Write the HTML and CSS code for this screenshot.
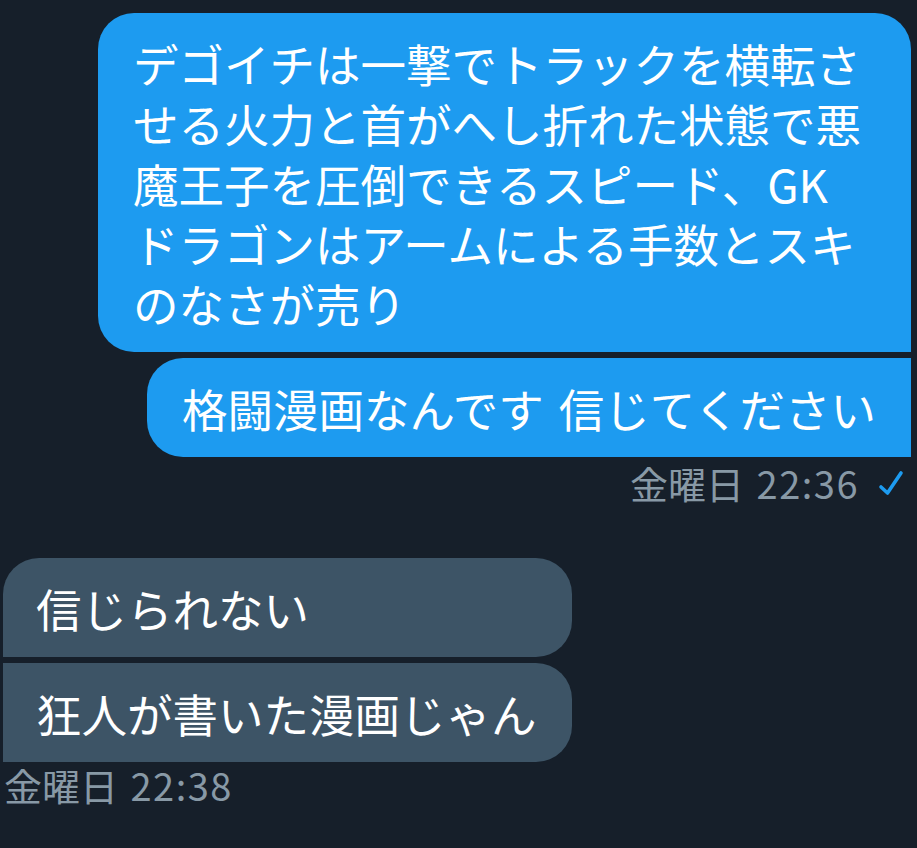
FILE: index.html
```html
<!DOCTYPE html>
<html lang="ja">
<head>
    <meta charset="UTF-8">
    <meta name="viewport" content="width=device-width, initial-scale=1.0">
    <title>メッセージ</title>
    <link rel="stylesheet" href="styles.css">
</head>
<body>
    <div class="thread">
        <div class="group sent">
            <div class="bubble">デゴイチは一撃でトラックを横転させる火力と首がへし折れた状態で悪魔王子を圧倒できるスピード、GKドラゴンはアームによる手数とスキのなさが売り</div>
            <div class="bubble">格闘漫画なんです 信じてください</div>
            <div class="meta">
                <span>金曜日 <span class="time">22:36</span></span>
                <svg class="check" width="26" height="26" viewBox="0 0 26 26">
                    <path d="M3 17 L9.5 23 L23 3" fill="none" stroke="#1d9bf0" stroke-width="3.6" stroke-linecap="round" stroke-linejoin="round"/>
                </svg>
            </div>
        </div>

        <div class="group received">
            <div class="stack">
                <div class="bubble">信じられない</div>
                <div class="bubble">狂人が書いた漫画じゃん</div>
            </div>
            <div class="meta">
                <span>金曜日 <span class="time">22:38</span></span>
            </div>
        </div>
    </div>
</body>
</html>
```

FILE: styles.css
```css
body {
    margin: 0;
    background: #161f2a;
    color: #ffffff;
    font-family: "Noto Sans CJK JP", "Noto Sans", sans-serif;
}

.thread {
    padding-top: 13px;
}

.group {
    display: flex;
    flex-direction: column;
}

.bubble {
    box-sizing: border-box;
    padding: 19.5px 35px;
    font-size: 45.5px;
    line-height: 60px;
    word-spacing: 5px;
}

/* Sent messages */
.sent {
    align-items: flex-end;
    gap: 6px;
    padding-right: 6px;
}

.sent .bubble {
    max-width: 813px;
    background: #1d9bf0;
    border-radius: 36px 36px 0 36px;
}

.sent .bubble:first-child {
    padding-right: 48px;
}

.sent .bubble + .bubble {
    border-top-right-radius: 0;
}

/* Received messages */
.received {
    align-items: flex-start;
    margin-top: 53px;
    padding-left: 3px;
}

.stack {
    display: flex;
    flex-direction: column;
    gap: 6px;
}

.received .bubble {
    padding-left: 33px;
    background: #3d5466;
    border-radius: 0 36px 36px 0;
}

.received .bubble:first-child {
    border-top-left-radius: 36px;
}

/* Timestamps */
.meta {
    display: flex;
    align-items: center;
    margin-top: -2px;
    font-size: 38px;
    line-height: 44px;
    color: #8899a6;
    word-spacing: 4px;
}

.meta .time {
    letter-spacing: 1.5px;
}

.sent .meta {
    padding-right: 7px;
}

.received .meta {
    margin-top: 1px;
    padding-left: 1px;
}

.check {
    margin-left: 19px;
}
```
